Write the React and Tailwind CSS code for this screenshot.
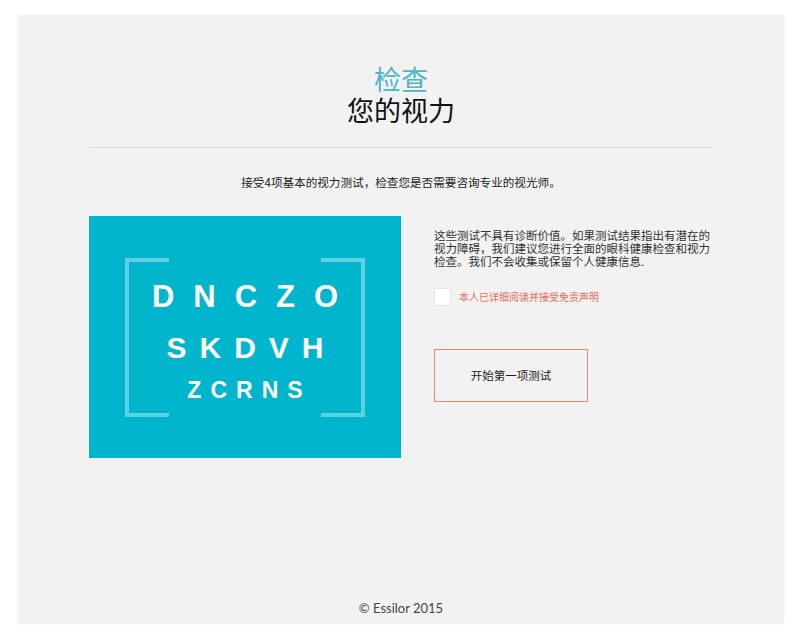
export default function App() {
  const cjk = { fontFamily: '"Noto Sans CJK SC", "Noto Sans", sans-serif' };
  return (
    <div className="w-[800px] h-[644px] bg-white pt-[15px] pl-[18px]" style={cjk}>
      <div className="w-[766px] h-[609px] bg-[#f2f2f2] flex flex-col items-center shadow-[0_0_2px_rgba(0,0,0,0.08)]">
        <div className="pt-[48px] flex flex-col items-center">
          <div className="text-[27px] leading-[31px] text-[#4cb6c8]">检查</div>
          <div className="text-[27px] leading-[31px] text-[#111]">您的视力</div>
        </div>
        <div className="w-[624px] mt-[22px] border-t border-[#dcdcdc]"></div>
        <div className="mt-[26px] text-[11.6px] leading-[16px] text-[#222]">
          接受4项基本的视力测试，检查您是否需要咨询专业的视光师。
        </div>
        <div className="w-[624px] mt-[26px] flex">
          <div className="w-[312px] h-[242px] bg-[#00b5cc] relative flex items-center justify-center shrink-0">
            <div className="relative w-[240px] h-[159px] flex flex-col items-center justify-center">
              <div className="absolute left-0 top-0 w-[44px] h-full border-l-4 border-t-4 border-b-4 border-[#5fd0e2]"></div>
              <div className="absolute right-0 top-0 w-[44px] h-full border-r-4 border-t-4 border-b-4 border-[#5fd0e2]"></div>
              <div
                className="relative mt-[3px] flex flex-col items-center text-white font-bold"
                style={{ fontFamily: '"Liberation Sans", Arial, sans-serif' }}
              >
                <div className="flex gap-[19px] text-[31px] leading-[50px]">
                  <span>D</span><span>N</span><span>C</span><span>Z</span><span>O</span>
                </div>
                <div className="flex gap-[13px] text-[30px] leading-[52px]">
                  <span>S</span><span>K</span><span>D</span><span>V</span><span>H</span>
                </div>
                <div className="flex gap-[9px] text-[23px] leading-[32px]">
                  <span>Z</span><span>C</span><span>R</span><span>N</span><span>S</span>
                </div>
              </div>
            </div>
          </div>
          <div className="ml-[33px] w-[280px] pt-[13px] flex flex-col items-start">
            <p className="text-[11.5px] leading-[13px] text-[#333]">
              这些测试不具有诊断价值。如果测试结果指出有潜在的视力障碍，我们建议您进行全面的眼科健康检查和视力检查。我们不会收集或保留个人健康信息.
            </p>
            <label className="mt-[20px] flex items-center">
              <span className="w-[17px] h-[18px] bg-white border border-[#e4e4e4] inline-block"></span>
              <span className="ml-[8px] text-[10px] leading-[14px] text-[#ee6a55]">本人已详细阅读并接受免责声明</span>
            </label>
            <button className="mt-[43px] w-[154px] h-[53px] border border-[#ee8574] bg-transparent text-[11.5px] text-[#222] flex items-center justify-center">
              开始第一项测试
            </button>
          </div>
        </div>
        <div
          className="mt-auto pb-[8px] text-[13px] leading-[16px] text-[#444]"
          style={{ fontFamily: 'Lato, "Open Sans", sans-serif' }}
        >
          © Essilor 2015
        </div>
      </div>
    </div>
  );
}
